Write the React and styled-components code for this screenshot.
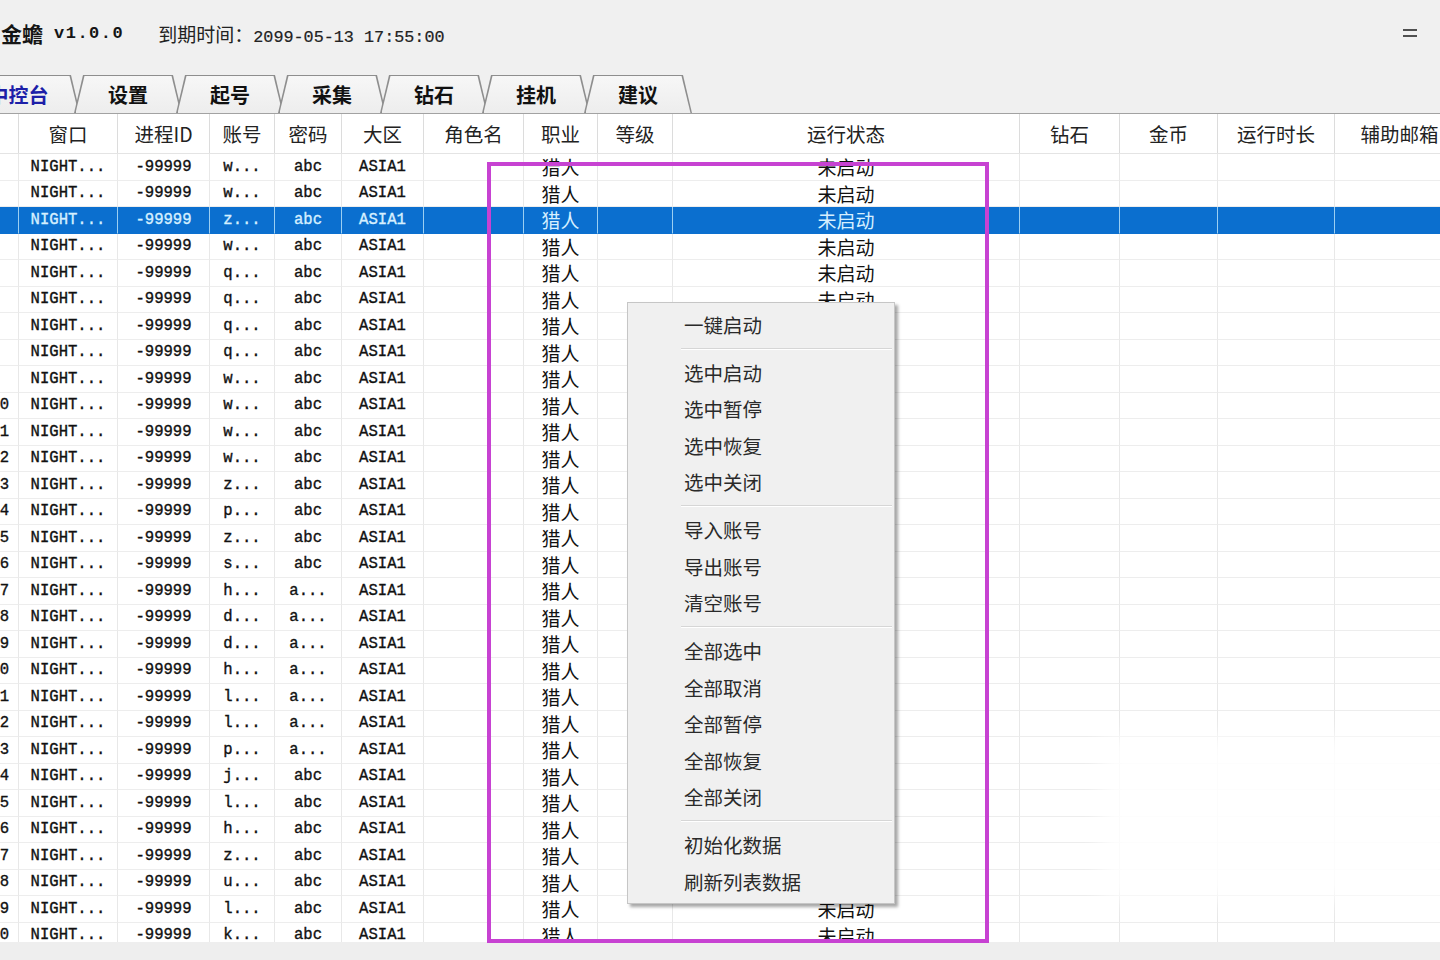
import React from "react";
import styled, { createGlobalStyle } from "styled-components";

const CJK = `"Noto Sans CJK SC", "Noto Sans", sans-serif`;
const MONO = `"Liberation Mono", "Noto Sans CJK SC", monospace`;

const COLS = "50px 99px 92px 65px 67px 82px 100px 74px 75px 347px 100px 98px 117px 130px";

const GlobalStyle = createGlobalStyle`
  html, body { margin: 0; padding: 0; background: #f0f0f0; }
  body { font-family: ${CJK}; }
  * { box-sizing: border-box; }
`;

const Screen = styled.div`
  position: relative;
  width: 1440px;
  height: 960px;
  overflow: hidden;
  background: #f0f0f0;
`;

const WindowBody = styled.div`
  margin-left: -31px;
  width: 1471px;
  height: 960px;
  display: flex;
  flex-direction: column;
`;

const TitleBar = styled.header`
  height: 74px;
  flex: none;
  display: flex;
  align-items: center;
  padding: 0 23px 8px 32px;
  color: #151515;
`;

const Brand = styled.span`
  font-size: 21px;
  font-weight: 700;
`;

const Version = styled.span`
  font-family: ${MONO};
  font-weight: 700;
  font-size: 17px;
  letter-spacing: 1.5px;
  margin-left: 11px;
`;

const Expire = styled.span`
  margin-left: 34px;
  font-size: 19px;
  color: #222;
`;

const ExpireValue = styled.span`
  font-family: ${MONO};
  font-size: 16.8px;
  -webkit-text-stroke: 0.2px currentColor;
`;

const MenuIcon = styled.span`
  margin-left: auto;
  width: 14px;
  height: 8px;
  border-top: 2px solid #505050;
  border-bottom: 2px solid #505050;
`;

const TabBar = styled.nav`
  height: 40px;
  flex: none;
  margin-left: -12px;
  display: flex;
  align-items: flex-end;
  border-bottom: 1px solid #a2a2a2;
`;

const Tab = styled.div`
  position: relative;
  isolation: isolate;
  width: ${(p) => p.$w}px;
  height: 38px;
  margin-left: -6px;
  &:first-child {
    margin-left: 0;
  }
  display: flex;
  align-items: center;
  justify-content: center;
  font-size: 20px;
  font-weight: 700;
  color: ${(p) => (p.$active ? "#1d1fa8" : "#111")};
  &::before,
  &::after {
    content: "";
    position: absolute;
    z-index: -1;
    clip-path: polygon(9px 0, calc(100% - 9px) 0, 100% 100%, 0 100%);
  }
  &::before {
    inset: 0;
    background: #8e8e8e;
  }
  &::after {
    inset: 1px 1.5px 0 1.5px;
    background: linear-gradient(#f7f7f7, #ededed);
  }
`;

const TableArea = styled.section`
  flex: 1;
  display: flex;
  flex-direction: column;
  overflow: hidden;
`;

const HeaderRow = styled.div`
  display: grid;
  grid-template-columns: ${COLS};
  height: 40px;
  flex: none;
  background: #fff;
  border-bottom: 1px solid #e4e4e4;
`;

const HeaderCell = styled.div`
  display: flex;
  align-items: center;
  justify-content: center;
  border-right: 1px solid #dcdcdc;
  font-size: 19.5px;
  color: #222;
  white-space: nowrap;
  overflow: hidden;
`;

const BodyViewport = styled.div`
  height: 788px;
  flex: none;
  overflow: hidden;
  background: #fff;
`;

const Row = styled.div`
  display: grid;
  grid-template-columns: ${COLS};
  height: 26.5px;
  background: ${(p) => (p.$selected ? "#0b6fcf" : "#fff")};
  color: ${(p) => (p.$selected ? "#d6efff" : "#111")};
`;

const Cell = styled.div`
  display: flex;
  align-items: center;
  justify-content: ${(p) => (p.$left ? "flex-start" : "center")};
  padding-left: ${(p) => (p.$left ? "21.5px" : "0")};
  border-right: 1px solid ${(p) => (p.$selected ? "#9ccff2" : "#e8e8e8")};
  border-bottom: 1px solid ${(p) => (p.$selected ? "#0b6fcf" : "#ededed")};
  font-family: ${(p) => (p.$mono ? MONO : CJK)};
  font-size: ${(p) => (p.$mono ? "15.6px" : "19px")};
  -webkit-text-stroke: ${(p) => (p.$mono ? "0.35px currentColor" : "0")};
  white-space: nowrap;
  overflow: hidden;
`;

const BottomStrip = styled.div`
  flex: 1;
  background: #eeeeee;
`;

const ContextMenu = styled.ul`
  position: absolute;
  left: 627px;
  top: 302px;
  width: 268px;
  margin: 0;
  padding: 3px 2px;
  list-style: none;
  background: #f0f0f0;
  border: 1px solid #c6c6c6;
  box-shadow: 3px 3px 3px rgba(0, 0, 0, 0.35);
`;

const MenuItem = styled.li`
  height: 36.5px;
  display: flex;
  align-items: center;
  padding-left: 54px;
  font-size: 19.5px;
  color: #2a2a2a;
`;

const MenuSeparator = styled.li`
  height: 11.5px;
  margin-left: 51px;
  display: flex;
  align-items: center;
  &::before {
    content: "";
    flex: 1;
    height: 1px;
    background: #d6d6d6;
    box-shadow: 0 1px 0 #ffffff;
  }
`;

const Annotation = styled.div`
  position: absolute;
  left: 487px;
  top: 162px;
  width: 502px;
  height: 781px;
  border: 4px solid #c742d2;
  pointer-events: none;
`;

const Glare = styled.div`
  position: absolute;
  left: 1100px;
  top: 735px;
  width: 360px;
  height: 165px;
  background: rgba(255, 255, 255, 0.85);
  filter: blur(10px);
  pointer-events: none;
`;

const TABS = [
  { label: "中控台", w: 123, active: true },
  { label: "设置", w: 108 },
  { label: "起号", w: 108 },
  { label: "采集", w: 108 },
  { label: "钻石", w: 108 },
  { label: "挂机", w: 108 },
  { label: "建议", w: 108 },
];

const HEADERS = ["", "窗口", "进程ID", "账号", "密码", "大区", "角色名", "职业", "等级", "运行状态", "钻石", "金币", "运行时长", "辅助邮箱"];

const ACCOUNTS = "wwzwqqqqwwwwzpzshddhllpjlhzulk".split("");
const PASSWORDS = ACCOUNTS.map((_, i) => (i >= 16 && i <= 22 ? "a..." : "abc"));

const MENU = [
  ["一键启动"],
  ["选中启动", "选中暂停", "选中恢复", "选中关闭"],
  ["导入账号", "导出账号", "清空账号"],
  ["全部选中", "全部取消", "全部暂停", "全部恢复", "全部关闭"],
  ["初始化数据", "刷新列表数据"],
];

export default function App() {
  return (
    <>
      <GlobalStyle />
      <Screen>
        <WindowBody>
          <TitleBar>
            <Brand>金蟾</Brand>
            <Version>v1.0.0</Version>
            <Expire>
              到期时间：<ExpireValue>2099-05-13 17:55:00</ExpireValue>
            </Expire>
            <MenuIcon />
          </TitleBar>
          <TabBar>
            {TABS.map((t) => (
              <Tab key={t.label} $w={t.w} $active={t.active}>
                {t.label}
              </Tab>
            ))}
          </TabBar>
          <TableArea>
            <HeaderRow>
              {HEADERS.map((h, i) => (
                <HeaderCell key={i}>{h}</HeaderCell>
              ))}
            </HeaderRow>
            <BodyViewport>
              {ACCOUNTS.map((a, i) => {
                const sel = i === 2;
                return (
                  <Row key={i} $selected={sel}>
                    <Cell $mono $left $selected={sel}>{i + 1}</Cell>
                    <Cell $mono $selected={sel}>NIGHT...</Cell>
                    <Cell $mono $selected={sel}>-99999</Cell>
                    <Cell $mono $selected={sel}>{a}...</Cell>
                    <Cell $mono $selected={sel}>{PASSWORDS[i]}</Cell>
                    <Cell $mono $selected={sel}>ASIA1</Cell>
                    <Cell $selected={sel}></Cell>
                    <Cell $selected={sel}>猎人</Cell>
                    <Cell $selected={sel}></Cell>
                    <Cell $selected={sel}>未启动</Cell>
                    <Cell $selected={sel}></Cell>
                    <Cell $selected={sel}></Cell>
                    <Cell $selected={sel}></Cell>
                    <Cell $selected={sel}></Cell>
                  </Row>
                );
              })}
            </BodyViewport>
            <BottomStrip />
          </TableArea>
        </WindowBody>
        <Glare />
        <ContextMenu>
          {MENU.map((group, gi) => (
            <React.Fragment key={gi}>
              {gi > 0 && <MenuSeparator />}
              {group.map((item) => (
                <MenuItem key={item}>{item}</MenuItem>
              ))}
            </React.Fragment>
          ))}
        </ContextMenu>
        <Annotation />
      </Screen>
    </>
  );
}
